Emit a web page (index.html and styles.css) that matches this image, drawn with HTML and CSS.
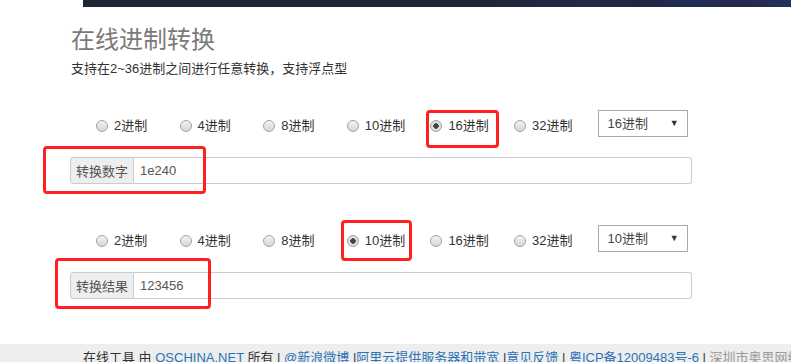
FILE: index.html
```html
<!DOCTYPE html>
<html lang="zh-CN">
<head>
  <meta charset="UTF-8">
  <title>在线进制转换</title>
  <link rel="stylesheet" href="styles.css">
</head>
<body>
  <div class="topbar"></div>

  <div class="main">
    <h1 class="title">在线进制转换</h1>
    <p class="desc">支持在2~36进制之间进行任意转换，支持浮点型</p>

    <div class="block">
      <div class="radios">
        <label class="radio"><input type="radio" name="from">2进制</label>
        <label class="radio"><input type="radio" name="from">4进制</label>
        <label class="radio"><input type="radio" name="from">8进制</label>
        <label class="radio"><input type="radio" name="from">10进制</label>
        <label class="radio"><input type="radio" name="from" checked>16进制</label>
        <label class="radio"><input type="radio" name="from">32进制</label>
        <div class="select-wrap">
          <select class="select"><option>16进制</option></select>
          <span class="arrow">&#9660;</span>
        </div>
      </div>
      <div class="input-group">
        <span class="addon">转换数字</span>
        <input class="field" type="text" value="1e240">
      </div>
    </div>

    <div class="block block-result">
      <div class="radios">
        <label class="radio"><input type="radio" name="to">2进制</label>
        <label class="radio"><input type="radio" name="to">4进制</label>
        <label class="radio"><input type="radio" name="to">8进制</label>
        <label class="radio"><input type="radio" name="to" checked>10进制</label>
        <label class="radio"><input type="radio" name="to">16进制</label>
        <label class="radio"><input type="radio" name="to">32进制</label>
        <div class="select-wrap">
          <select class="select"><option>10进制</option></select>
          <span class="arrow">&#9660;</span>
        </div>
      </div>
      <div class="input-group">
        <span class="addon">转换结果</span>
        <input class="field" type="text" value="123456">
      </div>
    </div>
  </div>

  <div class="footer">
    在线工具 由 <a href="#">OSCHINA.NET</a> 所有 | <a href="#">@新浪微博</a> |<a href="#">阿里云提供服务器和带宽</a> |<a href="#">意见反馈</a> | <a href="#">粤ICP备12009483号-6</a> | <span class="muted">深圳市奥思网络</span>
  </div>

  <!-- red annotation boxes -->
  <div class="mark mark-input"></div>
  <div class="mark mark-from"></div>
  <div class="mark mark-to"></div>
  <div class="mark mark-result"></div>
</body>
</html>
```

FILE: styles.css
```css
body {
  margin: 0;
  font-family: "Liberation Sans", "Noto Sans CJK SC", sans-serif;
  font-size: 13px;
  color: #333;
  background: #fff;
  overflow: hidden;
}
.topbar {
  margin-left: 83px;
  height: 7px;
  background: linear-gradient(90deg, #1d2433 0%, #1e2536 55%, #222a48 72%, #1f2740 78%, #232c55 86%, #222a4e 93%, #262f5c 100%);
}
.main {
  margin-left: 70px;
  width: 622px;
}
.title {
  margin: 18px 0 0 1px;
  font-size: 24px;
  font-weight: normal;
  line-height: 30px;
  color: #7a7a7a;
}
.desc {
  margin: 4px 0 0 1px;
  line-height: 20px;
}
.block {
  margin-top: 31px;
}
.block-result {
  margin-top: 41px;
}
.radios {
  display: flex;
  height: 27px;
  padding-left: 26px;
}
.radio {
  flex: none;
  width: 83.6px;
  display: flex;
  align-items: center;
  align-self: flex-end;
  line-height: 20px;
  margin-bottom: 1px;
}
.radio input {
  appearance: none;
  width: 12px;
  height: 12px;
  margin: 0 6px 0 0;
  border: 1px solid #a3a3a3;
  border-radius: 50%;
  background: linear-gradient(#f3f3f3, #d6d6d6);
  box-sizing: border-box;
}
.radio input:checked {
  background: radial-gradient(circle, #444 0 2.5px, #e6e6e6 3px, #cfcfcf 100%);
}
.select-wrap {
  position: relative;
  width: 90px;
  height: 27px;
}
.select {
  appearance: none;
  width: 100%;
  height: 100%;
  margin: 0;
  padding: 0 0 0 9px;
  border: 1px solid #a9a9a9;
  border-radius: 0;
  background: #fff;
  font: inherit;
  font-size: 13px;
  color: #444;
}
.arrow {
  position: absolute;
  right: 9px;
  top: 8px;
  font-size: 9px;
  line-height: 10px;
  color: #333;
}
.input-group {
  display: flex;
  height: 27px;
  margin-top: 20px;
}
.addon {
  flex: none;
  width: 64px;
  display: flex;
  align-items: center;
  justify-content: center;
  background: #eee;
  border: 1px solid #ccc;
  border-radius: 3px 0 0 3px;
  box-sizing: border-box;
  color: #555;
}
.field {
  flex: 1;
  margin: 0;
  padding: 0 0 0 6px;
  border: 1px solid #ccc;
  border-left: none;
  border-radius: 0 3px 3px 0;
  font: inherit;
  font-size: 13px;
  color: #555;
  outline: none;
}
.footer {
  margin-top: 45px;
  padding: 4px 0 0 83px;
  height: 30px;
  background: #eee;
  line-height: 20px;
  white-space: nowrap;
  color: #333;
}
.footer a {
  color: #2b73b7;
  text-decoration: none;
}
.footer .muted {
  color: #999;
}
.mark {
  position: absolute;
  border: 3px solid #ff2020;
  border-radius: 4px;
  box-sizing: border-box;
}
.mark-input {
  left: 43px;
  top: 146px;
  width: 163px;
  height: 48px;
}
.mark-from {
  left: 426px;
  top: 110px;
  width: 73px;
  height: 38px;
}
.mark-to {
  left: 341px;
  top: 220px;
  width: 71px;
  height: 41px;
}
.mark-result {
  left: 55px;
  top: 258px;
  width: 156px;
  height: 51px;
}
```
